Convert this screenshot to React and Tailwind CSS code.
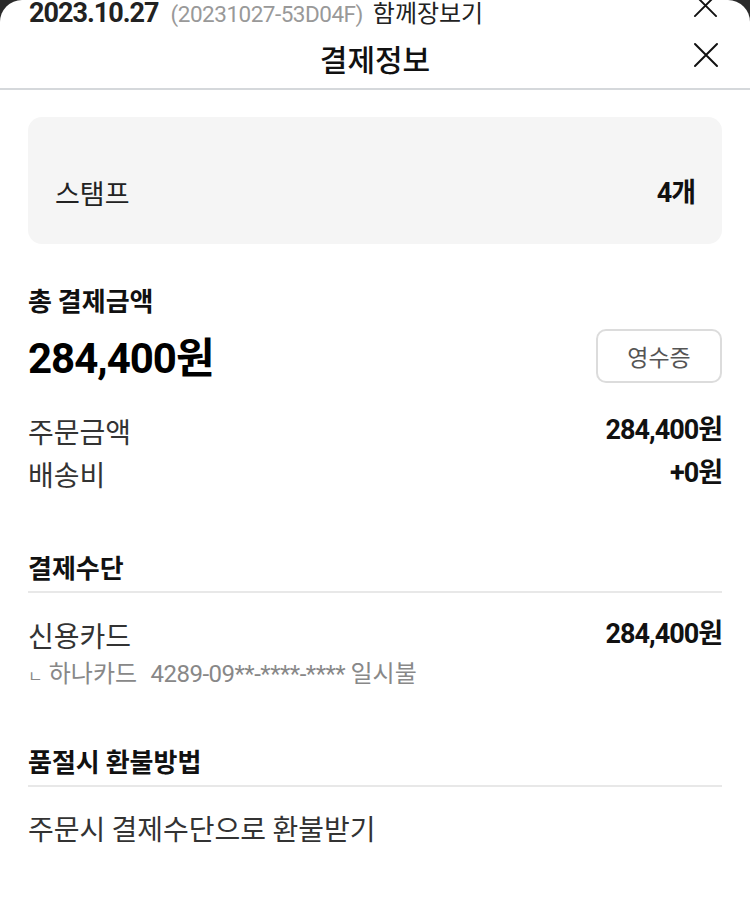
import React from "react";

const kr = { fontFamily: '"Noto Sans CJK KR", "Noto Sans", sans-serif' };
const num = { fontFamily: 'Roboto, "Noto Sans CJK KR", sans-serif' };

const CloseIcon = ({ className }) => (
  <svg viewBox="0 0 26 26" className={className} fill="none" stroke="#111" strokeWidth="2" strokeLinecap="round">
    <path d="M2 2L24 24M24 2L2 24" />
  </svg>
);

const Row = ({ label, value }) => (
  <div className="flex items-center justify-between h-[43px]">
    <span className="text-[28px] text-[#333]">{label}</span>
    <span style={num} className="text-[27px] font-bold tracking-[-1px] text-[#111]">
      {value}
    </span>
  </div>
);

const SectionTitle = ({ children }) => (
  <div className="border-b-2 border-[#e8e8e8] pb-[6px]">
    <h3 className="text-[26px] font-bold text-[#111] leading-[36px]">{children}</h3>
  </div>
);

export default function App() {
  return (
    <div style={kr} className="h-[921px] bg-[#2b2b2b] overflow-hidden">
      <div className="h-full bg-white rounded-t-[22px] overflow-hidden">
        {/* sheet behind, cut off */}
        <div className="-mt-[22px] h-[50px] flex items-end justify-between pl-[29px] pr-[32px]">
          <div className="flex items-baseline gap-[12px] leading-[28px]">
            <span style={num} className="text-[27px] font-bold tracking-[-1px] text-[#222]">2023.10.27</span>
            <span style={num} className="text-[22.5px] text-[#999] tracking-[-0.5px]">(20231027-53D04F)</span>
            <span className="text-[24px] text-[#222] -ml-[2px]">함께장보기</span>
          </div>
          <CloseIcon className="w-[25px] h-[25px] mb-[10px]" />
        </div>

        {/* header */}
        <div className="relative h-[62px] flex items-center justify-center border-b-2 border-[#d5d8db]">
          <h2 className="text-[30px] font-medium text-[#111]">결제정보</h2>
          <button className="absolute right-[31px] top-[14px]">
            <CloseIcon className="w-[26px] h-[26px]" />
          </button>
        </div>

        <main className="px-[28px]">
          {/* stamp box */}
          <div className="mt-[27px] h-[127px] rounded-[14px] bg-[#f5f5f5] flex items-end justify-between px-[27px] pb-[31px]">
            <span className="text-[27px] text-[#222]">스탬프</span>
            <span style={num} className="text-[27px] font-bold tracking-[-1px] text-[#111]">4개</span>
          </div>

          {/* total */}
          <div className="mt-[38px]">
            <p className="text-[26px] font-bold text-[#111] leading-[36px]">총 결제금액</p>
            <div className="mt-[13px] flex items-center justify-between">
              <span style={num} className="text-[42px] font-bold tracking-[-1px] text-[#000] leading-[56px]">
                284,400원
              </span>
              <button className="w-[126px] h-[54px] -mt-[6px] rounded-[10px] border-2 border-[#dcdcdc] text-[23px] text-[#555]">
                영수증
              </button>
            </div>
          </div>

          <div className="mt-[22px]">
            <Row label="주문금액" value="284,400원" />
            <Row label="배송비" value="+0원" />
          </div>

          {/* payment method */}
          <div className="mt-[54px]">
            <SectionTitle>결제수단</SectionTitle>
            <div className="mt-[20px]">
              <Row label="신용카드" value="284,400원" />
              <p className="text-[24px] text-[#888] leading-[36px] -mt-[2px]">
                <span className="text-[16px] mr-[6px]">ㄴ</span>하나카드{" "}
                <span style={num} className="ml-[8px] tracking-[-0.5px]">4289-09**-****-****</span> 일시불
              </p>
            </div>
          </div>

          {/* refund */}
          <div className="mt-[50px]">
            <SectionTitle>품절시 환불방법</SectionTitle>
            <p className="mt-[20px] text-[28px] text-[#333]">주문시 결제수단으로 환불받기</p>
          </div>
        </main>
      </div>
    </div>
  );
}
